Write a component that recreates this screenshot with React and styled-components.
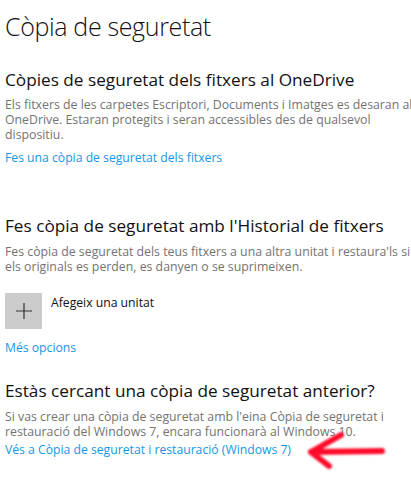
import React from "react";
import styled, { createGlobalStyle } from "styled-components";

const Global = createGlobalStyle`
  html, body {
    margin: 0;
    padding: 0;
    background: #fff;
  }
  body {
    font-family: "Open Sans", "Noto Sans", sans-serif;
    color: #000;
  }
`;

const Page = styled.div`
  width: 411px;
  height: 480px;
  padding: 0 0 0 5px;
  box-sizing: border-box;
  overflow: hidden;
  position: relative;
`;

const Title = styled.h1`
  margin: 0;
  padding-top: 9px;
  font-size: 25px;
  font-weight: 300;
  line-height: 34px;
  letter-spacing: -0.35px;
  color: #111;
`;

const Section = styled.section`
  margin-top: ${(p) => p.top}px;
`;

const Heading = styled.h2`
  margin: 0;
  font-size: 17.2px;
  font-weight: 400;
  line-height: 22px;
  color: #111;
`;

const Body = styled.p`
  margin: ${(p) => p.gap || 6}px 0 0;
  font-size: 12.3px;
  line-height: 15px;
  color: #737373;
  width: 408px;
`;

const Link = styled.a`
  display: block;
  font-size: 12.2px;
  line-height: 15px;
  color: #1597e5;
  text-decoration: none;
  margin-top: ${(p) => p.top || 0}px;
`;

const AddRow = styled.div`
  display: flex;
  align-items: flex-start;
  gap: 9px;
  margin-top: 19px;
`;

const AddTile = styled.div`
  width: 37px;
  height: 36px;
  background: #cccccc;
  display: flex;
  align-items: center;
  justify-content: center;
`;

const AddLabel = styled.span`
  font-size: 12.2px;
  line-height: 15px;
  margin-top: 2px;
  color: #111;
`;

const Arrow = styled.svg`
  position: absolute;
  left: 300px;
  top: 425px;
  filter: blur(0.8px);
`;

export default function App() {
  return (
    <Page>
      <Global />
      <Title>Còpia de seguretat</Title>

      <Section top={26}>
        <Heading>Còpies de seguretat dels fitxers al OneDrive</Heading>
        <Body>
          Els fitxers de les carpetes Escriptori, Documents i Imatges es desaran al
          OneDrive. Estaran protegits i seran accessibles des de qualsevol
          dispositiu.
        </Body>
        <Link href="#" top={8}>Fes una còpia de seguretat dels fitxers</Link>
      </Section>

      <Section top={50}>
        <Heading>Fes còpia de seguretat amb l'Historial de fitxers</Heading>
        <Body gap={7}>
          Fes còpia de seguretat dels teus fitxers a una altra unitat i restaura'ls si
          els originals es perden, es danyen o se suprimeixen.
        </Body>
        <AddRow>
          <AddTile>
            <svg width="18" height="18" viewBox="0 0 18 18">
              <path d="M9 1v16M1 9h16" stroke="#333" strokeWidth="1.2" />
            </svg>
          </AddTile>
          <AddLabel>Afegeix una unitat</AddLabel>
        </AddRow>
        <Link href="#" top={11}>Més opcions</Link>
      </Section>

      <Section top={25}>
        <Heading>Estàs cercant una còpia de seguretat anterior?</Heading>
        <Body gap={7}>
          Si vas crear una còpia de seguretat amb l'eina Còpia de seguretat i
          restauració del Windows 7, encara funcionarà al Windows 10.
        </Body>
        <Link href="#" top={3}>Vés a Còpia de seguretat i restauració (Windows 7)</Link>
      </Section>

      <Arrow width="95" height="50" viewBox="0 0 95 50">
        <path
          d="M82 26L11 27M11 27L41 10M11 27L29 41"
          stroke="#ff0a2a"
          strokeWidth="6"
          strokeLinecap="round"
          fill="none"
        />
      </Arrow>
    </Page>
  );
}
